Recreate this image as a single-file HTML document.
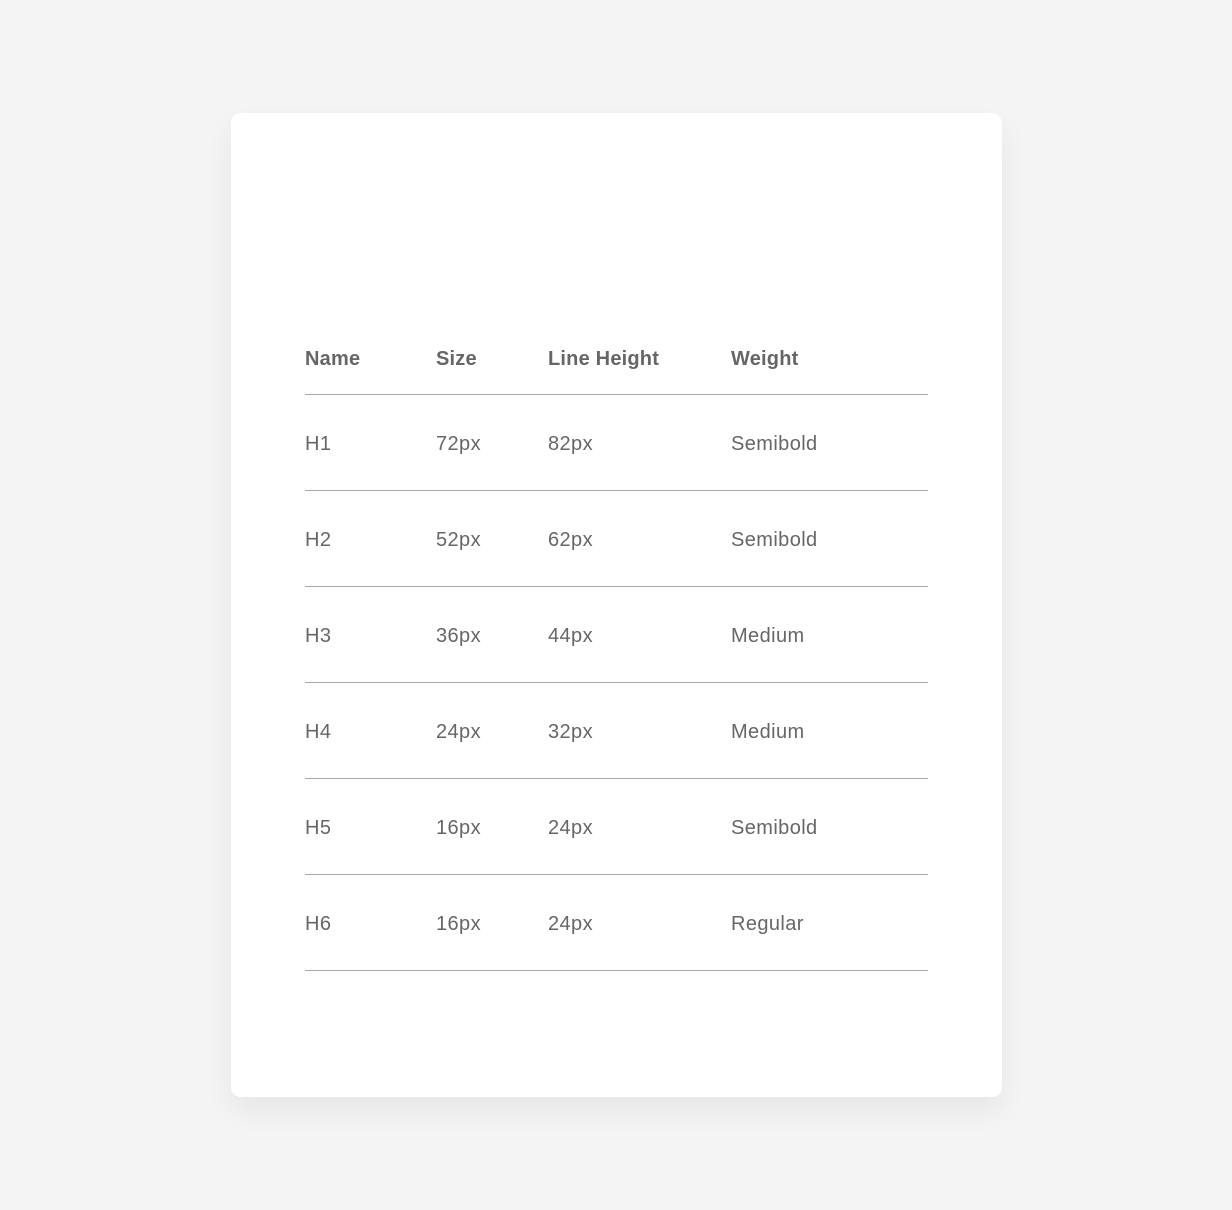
<!DOCTYPE html>
<html><head><style>
body{margin:0;background:#f4f4f4;width:1232px;height:1210px;position:relative;font-family:"Liberation Sans",sans-serif;color:#666;}
.card{position:absolute;left:231px;top:113px;width:771px;height:984px;background:#fff;border-radius:10px;box-shadow:0 14px 30px rgba(0,0,0,0.06);}
.row{position:absolute;left:305px;width:623px;height:96px;border-bottom:1px solid #a8a8a8;font-size:20px;letter-spacing:0.4px;}
.row span{position:absolute;top:2px;line-height:96px;}
.h span{font-weight:bold;top:1px;letter-spacing:0.2px}
</style></head><body>
<div class="card"></div>
<div class="row h" style="top:310px;height:84px"><span style="left:0;line-height:96px">Name</span><span style="left:131px">Size</span><span style="left:243px">Line Height</span><span style="left:426px">Weight</span></div>
<div class="row" style="top:394px"><span style="left:0">H1</span><span style="left:131px">72px</span><span style="left:243px">82px</span><span style="left:426px">Semibold</span></div>
<div class="row" style="top:490px"><span style="left:0">H2</span><span style="left:131px">52px</span><span style="left:243px">62px</span><span style="left:426px">Semibold</span></div>
<div class="row" style="top:586px"><span style="left:0">H3</span><span style="left:131px">36px</span><span style="left:243px">44px</span><span style="left:426px">Medium</span></div>
<div class="row" style="top:682px"><span style="left:0">H4</span><span style="left:131px">24px</span><span style="left:243px">32px</span><span style="left:426px">Medium</span></div>
<div class="row" style="top:778px"><span style="left:0">H5</span><span style="left:131px">16px</span><span style="left:243px">24px</span><span style="left:426px">Semibold</span></div>
<div class="row" style="top:874px"><span style="left:0">H6</span><span style="left:131px">16px</span><span style="left:243px">24px</span><span style="left:426px">Regular</span></div>
</body></html>
